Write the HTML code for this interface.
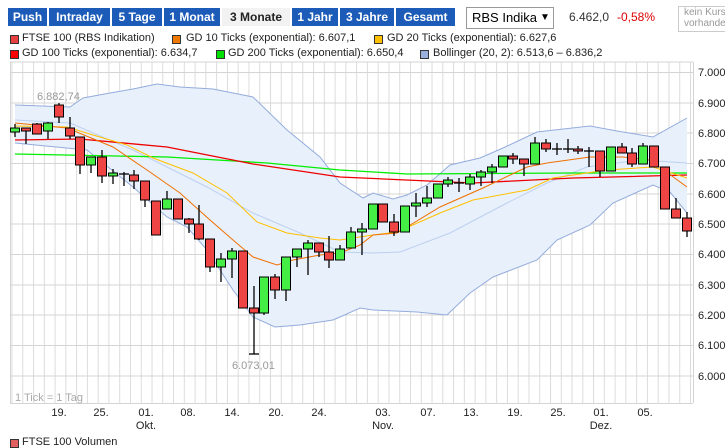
<!DOCTYPE html>
<html><head><meta charset="utf-8"><style>
body{margin:0;width:725px;height:448px;background:#fff;font-family:"Liberation Sans",sans-serif;position:relative;overflow:hidden}
.b{position:absolute;top:8px;height:18px;line-height:18px;background:#1c5cb8;color:#fff;font-weight:bold;font-size:12px;text-align:center}
.b.s{background:#f2f2f2;color:#222}
.t{position:absolute;font-size:11px;color:#222;white-space:nowrap}
.sq{position:absolute;width:7px;height:7px;border:1px solid #333}
</style></head><body>
<div class="b" style="left:8px;width:39px">Push</div>
<div class="b" style="left:49px;width:61px">Intraday</div>
<div class="b" style="left:112px;width:50px">5 Tage</div>
<div class="b" style="left:164px;width:56px">1 Monat</div>
<div class="b s" style="left:222px;width:68px">3 Monate</div>
<div class="b" style="left:292px;width:46px">1 Jahr</div>
<div class="b" style="left:340px;width:54px">3 Jahre</div>
<div class="b" style="left:396px;width:59px">Gesamt</div>
<div style="position:absolute;left:466px;top:7px;width:86px;height:20px;border:1px solid #999;font-size:13px;line-height:20px;overflow:hidden;white-space:nowrap"><span style="position:absolute;left:5px">RBS Indika</span><span style="position:absolute;right:0;width:16px;background:#fff;text-align:center;font-size:10px">▼</span></div>
<div class="t" style="left:569px;top:10px;font-size:12px;color:#333">6.462,0</div>
<div class="t" style="left:617px;top:10px;font-size:12px;color:#d00">-0,58%</div>
<div style="position:absolute;left:678px;top:6px;width:60px;height:24px;border:1px solid #ccc;font-size:10px;color:#999;line-height:11px;padding-left:5px;overflow:hidden">kein Kurs<br>vorhanden</div>

<div class="sq" style="left:10px;top:35px;background:#e84040"></div><div class="t" style="left:22px;top:32px">FTSE 100 (RBS Indikation)</div>
<div class="sq" style="left:172px;top:35px;background:#f07a00"></div><div class="t" style="left:186px;top:32px">GD 10 Ticks (exponential): 6.607,1</div>
<div class="sq" style="left:374px;top:35px;background:#ffc000"></div><div class="t" style="left:387px;top:32px">GD 20 Ticks (exponential): 6.627,6</div>
<div class="sq" style="left:10px;top:50px;background:#f00"></div><div class="t" style="left:22px;top:47px">GD 100 Ticks (exponential): 6.634,7</div>
<div class="sq" style="left:216px;top:50px;background:#00e000"></div><div class="t" style="left:228px;top:47px">GD 200 Ticks (exponential): 6.650,4</div>
<div class="sq" style="left:420px;top:50px;background:#9ab0dc"></div><div class="t" style="left:433px;top:47px">Bollinger (20, 2): 6.513,6 – 6.836,2</div>

<svg width="725" height="448" style="position:absolute;left:0;top:0" xmlns="http://www.w3.org/2000/svg">
<defs><pattern id="vg" x="11.5" y="0" width="10.77" height="10" patternUnits="userSpaceOnUse"><line x1="0.5" y1="0" x2="0.5" y2="10" stroke="#dcdcdc"/></pattern></defs>
<rect x="10" y="62" width="683" height="341" fill="url(#vg)"/>
<g stroke="#d4d4d4">
<line x1="10" y1="62" x2="693" y2="62"/><line x1="10" y1="72.5" x2="693" y2="72.5"/><line x1="10" y1="103" x2="693" y2="103"/><line x1="10" y1="133" x2="693" y2="133"/><line x1="10" y1="163.5" x2="693" y2="163.5"/><line x1="10" y1="194" x2="693" y2="194"/><line x1="10" y1="224" x2="693" y2="224"/><line x1="10" y1="254.5" x2="693" y2="254.5"/><line x1="10" y1="285" x2="693" y2="285"/><line x1="10" y1="315" x2="693" y2="315"/><line x1="10" y1="345.5" x2="693" y2="345.5"/><line x1="10" y1="376" x2="693" y2="376"/><line x1="10" y1="403.5" x2="693" y2="403.5"/>
<line x1="10.5" y1="62" x2="10.5" y2="403"/><line x1="693.5" y1="62" x2="693.5" y2="403"/>
</g>
<polygon fill="#e8f0fb" points="15,105 70,107 83,98 110,93 133,89 157,84 180,87 213,89 253,97 287,130 320,157 340,183 363,198 373,193 393,199 407,195 427,185 450,165 480,158 503,148 537,132 590,126 617,131 653,137 687,118 687,213 670,192 653,185 613,203 590,225 557,240 537,260 493,277 470,293 447,315 417,312 373,310 360,308 340,317 333,320 300,325 275,327 253,317 233,290 207,250 187,227 167,217 133,187 87,150 15,143"/>
<g fill="none" stroke-width="1">
<polyline stroke="#94acdc" points="15,105 70,107 83,98 110,93 133,89 157,84 180,87 213,89 253,97 287,130 320,157 340,183 363,198 373,193 393,199 407,195 427,185 450,165 480,158 503,148 537,132 590,126 617,131 653,137 687,118"/>
<polyline stroke="#94acdc" points="15,143 87,150 133,187 167,217 187,227 207,250 233,290 253,317 275,327 300,325 333,320 340,317 360,308 373,310 417,312 447,315 470,293 493,277 537,260 557,240 590,225 613,203 653,185 670,192 687,213"/>
<polyline stroke="#bcd0f0" points="15,120 70,123 133,150 207,187 253,213 300,233 340,252 373,253 400,252 450,233 507,203 547,183 587,167 640,160 687,163"/>
<polyline stroke="#00ee00" stroke-width="1.3" points="15,154 167,157 267,163 340,170 407,174 573,173 687,173"/>
<polyline stroke="#ee0000" stroke-width="1.3" points="15,140 80,139 167,147 253,164 340,177 473,183 573,178 687,175"/>
<polyline stroke="#ffc000" points="15,126 67,127 93,135 127,145 153,158 193,173 227,193 257,222 287,233 320,238 340,240 373,235 397,232 440,213 473,200 527,190 553,178 607,170 653,167 687,178"/>
<polyline stroke="#f07000" points="15,123 67,128 113,147 147,170 180,193 210,220 233,240 253,257 277,265 293,260 320,255 340,253 360,245 373,235 397,233 440,207 483,188 527,167 547,163 590,157 623,157 650,160 687,187"/>
</g>
<g stroke="#000" stroke-width="1.3">
<line x1="15" y1="124" x2="15" y2="137"/><line x1="26" y1="128" x2="26" y2="144"/><line x1="37" y1="123" x2="37" y2="134"/><line x1="48" y1="122" x2="48" y2="139"/><line x1="59" y1="103" x2="59" y2="123"/><line x1="70" y1="117" x2="70" y2="139"/><line x1="80" y1="137" x2="80" y2="174"/><line x1="91" y1="157" x2="91" y2="173"/><line x1="102" y1="150" x2="102" y2="183"/><line x1="113" y1="169" x2="113" y2="184"/><line x1="124" y1="172" x2="124" y2="186"/><line x1="119" y1="174" x2="129" y2="174"/><line x1="134" y1="170" x2="134" y2="189"/><line x1="145" y1="181" x2="145" y2="207"/><line x1="167" y1="191" x2="167" y2="209"/><line x1="189" y1="218" x2="189" y2="233"/><line x1="199" y1="205" x2="199" y2="240"/><line x1="210" y1="239" x2="210" y2="272"/><line x1="221" y1="253" x2="221" y2="282"/><line x1="232" y1="248" x2="232" y2="278"/><line x1="254" y1="286" x2="254" y2="354"/><line x1="249" y1="354" x2="259" y2="354"/><line x1="264" y1="277" x2="264" y2="315"/><line x1="275" y1="274" x2="275" y2="299"/><line x1="286" y1="257" x2="286" y2="301"/><line x1="297" y1="249" x2="297" y2="267"/><line x1="308" y1="240" x2="308" y2="275"/><line x1="319" y1="243" x2="319" y2="257"/><line x1="329" y1="236" x2="329" y2="268"/><line x1="340" y1="245" x2="340" y2="260"/><line x1="351" y1="227" x2="351" y2="248"/><line x1="362" y1="223" x2="362" y2="255"/><line x1="394" y1="214" x2="394" y2="236"/><line x1="416" y1="193" x2="416" y2="217"/><line x1="427" y1="186" x2="427" y2="207"/><line x1="448" y1="177" x2="448" y2="187"/><line x1="459" y1="178" x2="459" y2="192"/><line x1="454" y1="183" x2="464" y2="183"/><line x1="470" y1="174" x2="470" y2="190"/><line x1="481" y1="170" x2="481" y2="186"/><line x1="492" y1="164" x2="492" y2="183"/><line x1="513" y1="153" x2="513" y2="164"/><line x1="524" y1="159" x2="524" y2="176"/><line x1="535" y1="137" x2="535" y2="164"/><line x1="546" y1="139" x2="546" y2="152"/><line x1="557" y1="143" x2="557" y2="155"/><line x1="552" y1="149" x2="562" y2="149"/><line x1="568" y1="139" x2="568" y2="153"/><line x1="563" y1="149" x2="573" y2="149"/><line x1="578" y1="146" x2="578" y2="154"/><line x1="589" y1="147" x2="589" y2="167"/><line x1="584" y1="151" x2="594" y2="151"/><line x1="600" y1="151" x2="600" y2="177"/><line x1="622" y1="143" x2="622" y2="153"/><line x1="632" y1="148" x2="632" y2="167"/><line x1="643" y1="143" x2="643" y2="164"/><line x1="676" y1="198" x2="676" y2="218"/><line x1="687" y1="212" x2="687" y2="237"/>
</g>
<g stroke="#000" stroke-width="1">
<rect x="10.5" y="128" width="9" height="4" fill="#44ee44"/><rect x="21.5" y="128" width="9" height="3" fill="#ee4444"/><rect x="32.5" y="124" width="9" height="10" fill="#ee4444"/><rect x="43.5" y="123" width="9" height="8" fill="#44ee44"/><rect x="54.5" y="105" width="9" height="12" fill="#ee4444"/><rect x="65.5" y="128" width="9" height="8" fill="#ee4444"/><rect x="75.5" y="137" width="9" height="28" fill="#ee4444"/><rect x="86.5" y="157" width="9" height="8" fill="#44ee44"/><rect x="97.5" y="157" width="9" height="19" fill="#ee4444"/><rect x="108.5" y="173" width="9" height="3" fill="#44ee44"/><rect x="129.5" y="175" width="9" height="6" fill="#ee4444"/><rect x="140.5" y="181" width="9" height="19" fill="#ee4444"/><rect x="151.5" y="201" width="9" height="34" fill="#ee4444"/><rect x="162.5" y="199" width="9" height="10" fill="#44ee44"/><rect x="173.5" y="199" width="9" height="20" fill="#ee4444"/><rect x="184.5" y="219" width="9" height="5" fill="#ee4444"/><rect x="194.5" y="224" width="9" height="15" fill="#ee4444"/><rect x="205.5" y="239" width="9" height="28" fill="#ee4444"/><rect x="216.5" y="259" width="9" height="8" fill="#44ee44"/><rect x="227.5" y="251" width="9" height="8" fill="#44ee44"/><rect x="238.5" y="251" width="9" height="57" fill="#ee4444"/><rect x="249.5" y="308" width="9" height="5" fill="#ee4444"/><rect x="259.5" y="277" width="9" height="36" fill="#44ee44"/><rect x="270.5" y="277" width="9" height="13" fill="#ee4444"/><rect x="281.5" y="257" width="9" height="33" fill="#44ee44"/><rect x="292.5" y="249" width="9" height="8" fill="#44ee44"/><rect x="303.5" y="243" width="9" height="6" fill="#44ee44"/><rect x="314.5" y="243" width="9" height="9" fill="#ee4444"/><rect x="324.5" y="252" width="9" height="8" fill="#ee4444"/><rect x="335.5" y="249" width="9" height="11" fill="#44ee44"/><rect x="346.5" y="232" width="9" height="16" fill="#44ee44"/><rect x="357.5" y="229" width="9" height="3" fill="#44ee44"/><rect x="368.5" y="204" width="9" height="25" fill="#44ee44"/><rect x="378.5" y="204" width="9" height="18" fill="#ee4444"/><rect x="389.5" y="222" width="9" height="10" fill="#ee4444"/><rect x="400.5" y="206" width="9" height="26" fill="#44ee44"/><rect x="411.5" y="203" width="9" height="3" fill="#44ee44"/><rect x="422.5" y="198" width="9" height="5" fill="#44ee44"/><rect x="433.5" y="184" width="9" height="14" fill="#44ee44"/><rect x="443.5" y="180" width="9" height="4" fill="#44ee44"/><rect x="465.5" y="177" width="9" height="7" fill="#44ee44"/><rect x="476.5" y="172" width="9" height="5" fill="#44ee44"/><rect x="487.5" y="167" width="9" height="5" fill="#44ee44"/><rect x="498.5" y="156" width="9" height="11" fill="#44ee44"/><rect x="508.5" y="156" width="9" height="3" fill="#ee4444"/><rect x="519.5" y="159" width="9" height="5" fill="#ee4444"/><rect x="530.5" y="143" width="9" height="21" fill="#44ee44"/><rect x="541.5" y="143" width="9" height="6" fill="#ee4444"/><rect x="573.5" y="149" width="9" height="2" fill="#ee4444"/><rect x="595.5" y="151" width="9" height="20" fill="#ee4444"/><rect x="606.5" y="147" width="9" height="24" fill="#44ee44"/><rect x="617.5" y="147" width="9" height="6" fill="#ee4444"/><rect x="627.5" y="153" width="9" height="11" fill="#ee4444"/><rect x="638.5" y="146" width="9" height="18" fill="#44ee44"/><rect x="649.5" y="146" width="9" height="21" fill="#ee4444"/><rect x="660.5" y="167" width="9" height="42" fill="#ee4444"/><rect x="671.5" y="209" width="9" height="9" fill="#ee4444"/><rect x="682.5" y="218" width="9" height="13" fill="#ee4444"/>
</g>
<g font-family="Liberation Sans, sans-serif" font-size="11" fill="#999">
<text x="37" y="100">6.882,74</text><text x="232" y="369">6.073,01</text>
<text x="15" y="401" fill="#aaa">1 Tick = 1 Tag</text>
</g>
<g font-family="Liberation Sans, sans-serif" font-size="11" fill="#222">
<text x="698" y="76">7.000</text><text x="698" y="107">6.900</text><text x="698" y="137">6.800</text><text x="698" y="167">6.700</text><text x="698" y="198">6.600</text><text x="698" y="228">6.500</text><text x="698" y="258">6.400</text><text x="698" y="289">6.300</text><text x="698" y="319">6.200</text><text x="698" y="349">6.100</text><text x="698" y="380">6.000</text>
</g>
<g font-family="Liberation Sans, sans-serif" font-size="11" fill="#222" text-anchor="middle">
<text x="59" y="416">19.</text><text x="101" y="416">25.</text><text x="146" y="416">01.</text><text x="188" y="416">08.</text><text x="232" y="416">14.</text><text x="276" y="416">20.</text><text x="319" y="416">24.</text><text x="383" y="416">03.</text><text x="428" y="416">07.</text><text x="471" y="416">13.</text><text x="515" y="416">19.</text><text x="558" y="416">25.</text><text x="601" y="416">01.</text><text x="645" y="416">05.</text>
<text x="146" y="429">Okt.</text><text x="383" y="429">Nov.</text><text x="601" y="429">Dez.</text>
</g>
</svg>
<div class="sq" style="left:10px;top:439px;background:#e06060"></div><div class="t" style="left:22px;top:436px">FTSE 100 Volumen</div>
</body></html>
